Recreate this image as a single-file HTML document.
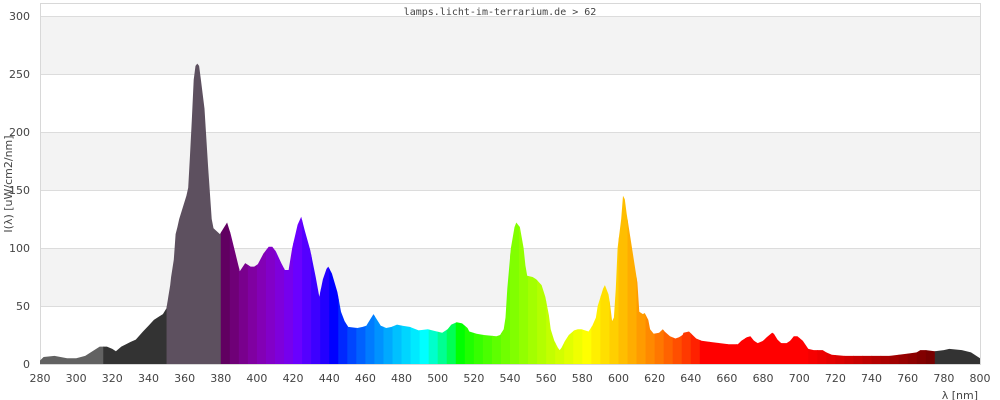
<!DOCTYPE html>
<html><head><meta charset="utf-8"><style>
html,body{margin:0;padding:0;background:#fff;width:1000px;height:400px;overflow:hidden}
svg text{font-family:"DejaVu Sans","Liberation Sans",sans-serif;font-size:11px;fill:#444}
</style></head><body>
<svg id="s" width="1000" height="400" xmlns="http://www.w3.org/2000/svg">
<rect x="40" y="16" width="940" height="58" fill="#f3f3f3"/>
<rect x="40" y="132" width="940" height="58" fill="#f3f3f3"/>
<rect x="40" y="248" width="940" height="58" fill="#f3f3f3"/>
<g stroke="#dcdcdc" stroke-width="1">
<line x1="40" y1="16.5" x2="980" y2="16.5"/><line x1="40" y1="74.5" x2="980" y2="74.5"/>
<line x1="40" y1="132.5" x2="980" y2="132.5"/><line x1="40" y1="190.5" x2="980" y2="190.5"/>
<line x1="40" y1="248.5" x2="980" y2="248.5"/><line x1="40" y1="306.5" x2="980" y2="306.5"/>
</g>
<rect x="40.5" y="3.5" width="940" height="361" fill="none" stroke="#d8d8d8"/>
<defs><clipPath id="cp"><polygon id="curve" points=""/></clipPath></defs>
<g id="bars" clip-path="url(#cp)"></g>
<text x="500" y="15" text-anchor="middle" style="font-family:'DejaVu Sans Mono','Liberation Mono',monospace;font-size:10px;fill:#444">lamps.licht-im-terrarium.de &gt; 62</text>
<g text-anchor="end">
<text x="30" y="20">300</text><text x="30" y="78">250</text><text x="30" y="136">200</text>
<text x="30" y="194">150</text><text x="30" y="252">100</text><text x="30" y="310">50</text><text x="30" y="368">0</text>
</g>
<g id="xl" text-anchor="middle"></g>
<text transform="translate(12,184) rotate(-90)" text-anchor="middle">I(λ)  [uW/cm2/nm]</text>
<text x="978" y="399" text-anchor="end">λ [nm]</text>
</svg>
<script>
var d=[[280,3],[282,6],[288,7],[295,5],[300,5],[305,7],[310,12],[313,15],[317,15],[320,13],[322,11],[325,15],[330,19],[333,21],[337,28],[340,33],[343,38],[346,41],[348,43],[350,48],[352,58],[354,68],[355,75],[357,90],[358,112],[359,118],[360,125],[362,135],[364,145],[365,152],[366,180],[367,210],[368,245],[369,257],[370,259],[371,257],[372,245],[374,220],[376,170],[378,125],[379,117],[381,112],[383,117],[385,122],[387,112],[390,93],[392,80],[395,87],[398,84],[400,84],[402,86],[405,95],[408,101],[410,101],[412,97],[415,87],[417,81],[419,81],[421,100],[424,120],[426,127],[428,115],[431,98],[434,75],[436,58],[438,73],[440,82],[441,84],[443,78],[446,62],[448,45],[450,37],[452,32],[456,31],[459,32],[461,33],[463,38],[465,43],[467,38],[469,33],[472,31],[475,32],[478,34],[481,33],[485,32],[490,29],[495,30],[500,28],[503,27],[506,30],[508,34],[511,36],[514,35],[517,31],[518,28],[522,26],[526,25],[535,24],[537,25],[539,30],[540,40],[541,65],[543,100],[545,118],[546,122],[548,118],[550,100],[551,85],[552,76],[555,75],[557,73],[560,68],[562,58],[564,42],[565,30],[567,20],[569,14],[570,12],[571,14],[573,20],[575,25],[578,29],[580,30],[582,30],[584,29],[586,28],[588,33],[590,40],[591,50],[594,65],[595,68],[597,60],[598,50],[599,37],[600,40],[601,65],[602,100],[604,125],[605,145],[606,142],[607,130],[609,110],[611,90],[613,70],[614,45],[616,43],[617,44],[619,38],[620,30],[622,26],[625,27],[627,30],[628,28],[631,24],[634,22],[636,23],[638,25],[640,27],[643,28],[645,25],[647,22],[650,20],[655,19],[660,18],[665,17],[670,17],[672,20],[675,23],[677,24],[679,20],[681,18],[684,20],[686,23],[689,27],[690,26],[692,21],[694,18],[697,18],[699,20],[701,24],[703,24],[706,20],[709,13],[712,12],[714,12],[717,12],[719,10],[722,8],[725,7],[745,7],[750,7],[755,8],[760,9],[765,10],[767,12],[770,12],[775,11],[780,12],[783,13],[790,12],[795,10],[800,5]];
function sh(n){if(n<=350)return 0;if(n<356)return -(n-350)/2;if(n<380)return -3;if(n<=455)return -1.5;if(n<530)return -0.5;if(n<640)return -2.5;if(n<=722)return -4;return 0;}
function X(n){return 40+(n-280)*940/520}
function Y(v){return 364-v*1.16}
var pts=d.map(function(p){return X(p[0]+sh(p[0])).toFixed(1)+","+Y(p[1]).toFixed(1)});
pts.push(X(800)+",364");pts.push(X(280)+",364");
document.getElementById("curve").setAttribute("points",pts.join(" "));
function col(w){
 if(w<315)return"#626262";if(w<350)return"#333";if(w<380)return"#5d505f";if(w>=775)return"#333";
 var r=0,g=0,b=0;
 if(w<440){r=-(w-440)/60;b=1}else if(w<490){g=(w-440)/50;b=1}else if(w<510){g=1;b=-(w-510)/20}
 else if(w<580){r=(w-510)/70;g=1}else if(w<645){r=1;g=-(w-645)/65}else{r=1}
 var f=1;if(w<420)f=0.3+0.7*(w-380)/40;else if(w>700)f=0.3+0.7*(780-w)/80;
 function c(x){return x==0?0:Math.round(255*Math.pow(x*f,0.8))}
 return"rgb("+c(r)+","+c(g)+","+c(b)+")";
}
var ns="http://www.w3.org/2000/svg",bars=document.getElementById("bars");
var edges=[280,315,350,380];for(var w=385;w<775;w+=5)edges.push(w);edges.push(775,800);
for(var i=0;i<edges.length-1;i++){var r=document.createElementNS(ns,"rect");
 var x0=X(edges[i]),x1=X(edges[i+1]);r.setAttribute("x",x0);r.setAttribute("width",x1-x0+0.6);
 r.setAttribute("y",0);r.setAttribute("height",364);r.setAttribute("fill",col(edges[i]));bars.appendChild(r);}
var xl=document.getElementById("xl");
for(var n=280;n<=800;n+=20){var t=document.createElementNS(ns,"text");t.setAttribute("x",X(n));t.setAttribute("y",382);t.textContent=n;xl.appendChild(t);}
</script>
</body></html>
